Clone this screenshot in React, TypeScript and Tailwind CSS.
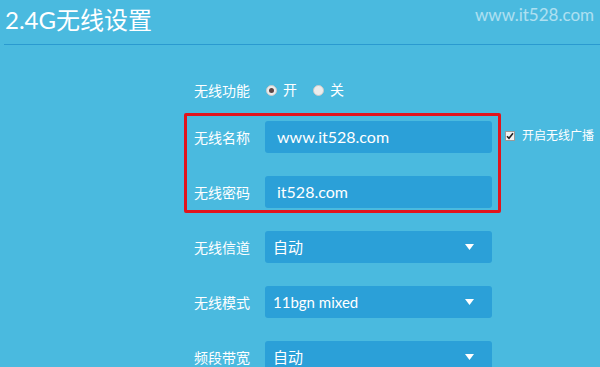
import { useState } from "react";

const FONT = "font-['Lato','Noto_Sans_CJK_SC',sans-serif]";

function Arrow() {
  return (
    <svg width="9" height="6" viewBox="0 0 9 6" className="shrink-0">
      <path d="M0 0 H9 L4.5 6 Z" fill="#ffffff" />
    </svg>
  );
}

function Radio({ checked, label }: { checked: boolean; label: string }) {
  return (
    <label className="flex items-center gap-[6px]">
      <span className="flex h-[11px] w-[11px] items-center justify-center rounded-full border border-[#c9c9c9] bg-[#ececec]">
        {checked ? <span className="h-[5px] w-[5px] rounded-full bg-[#5b4646]" /> : null}
      </span>
      <span className="text-[14px] leading-5 text-white">{label}</span>
    </label>
  );
}

function TextRow({ label, value }: { label: string; value: string }) {
  return (
    <div className="flex h-8 items-center">
      <span className="w-[71px] text-[14px] text-white">{label}</span>
      <div className="flex h-8 w-[227px] items-center rounded-[3px] bg-[#2ba0d8] pl-3 text-[16px] text-white">
        {value}
      </div>
    </div>
  );
}

function SelectRow({ label, value }: { label: string; value: string }) {
  return (
    <div className="flex h-8 items-center">
      <span className="w-[71px] text-[14px] text-white">{label}</span>
      <div className="flex h-8 w-[227px] items-center justify-between rounded-[3px] bg-[#2ba0d8] pl-2 pr-[18px] text-[15px] text-white">
        <span>{value}</span>
        <Arrow />
      </div>
    </div>
  );
}

export default function App() {
  const [enabled] = useState(true);

  return (
    <div className={`h-[367px] w-[600px] overflow-hidden bg-[#4abadf] ${FONT}`}>
      <div className="flex items-start justify-between pl-[5px] pr-[6px] pt-[3px]">
        <h1 className="text-[24px] leading-[34px] text-white">2.4G无线设置</h1>
        <span className="text-[17px] leading-6 text-white/55">www.it528.com</span>
      </div>
      <div className="ml-[4px] mt-[7px] h-px bg-[#2a9ad0]" />

      <div className="pl-[194px]">
        <div className="mt-[35px] flex h-5 items-center">
          <span className="w-[72px] text-[14px] text-white">无线功能</span>
          <div className="flex items-center gap-4">
            <Radio checked={enabled} label="开" />
            <Radio checked={!enabled} label="关" />
          </div>
        </div>

        <div className="ml-[-10px] mt-[13px] flex items-start">
          <div className="flex w-[317px] flex-col gap-[23px] rounded-[2px] border-[3px] border-[#e1141c] pb-[2px] pl-[7px] pr-[6px] pt-[5px]">
            <TextRow label="无线名称" value="www.it528.com" />
            <TextRow label="无线密码" value="it528.com" />
          </div>
          <label className="ml-[4px] mt-[15px] flex items-center gap-[7px]">
            <span className="flex h-[10px] w-[10px] items-center justify-center border border-[#9a9a9a] bg-[#f2f2f2]">
              <svg width="8" height="8" viewBox="0 0 8 8">
                <path d="M1 4.2 L3 6.3 L7 1.3" stroke="#222" strokeWidth="1.6" fill="none" />
              </svg>
            </span>
            <span className="text-[12px] leading-4 text-white">开启无线广播</span>
          </label>
        </div>

        <div className="mt-[18px] flex flex-col gap-[23px]">
          <SelectRow label="无线信道" value="自动" />
          <SelectRow label="无线模式" value="11bgn mixed" />
          <SelectRow label="频段带宽" value="自动" />
        </div>
      </div>
    </div>
  );
}
